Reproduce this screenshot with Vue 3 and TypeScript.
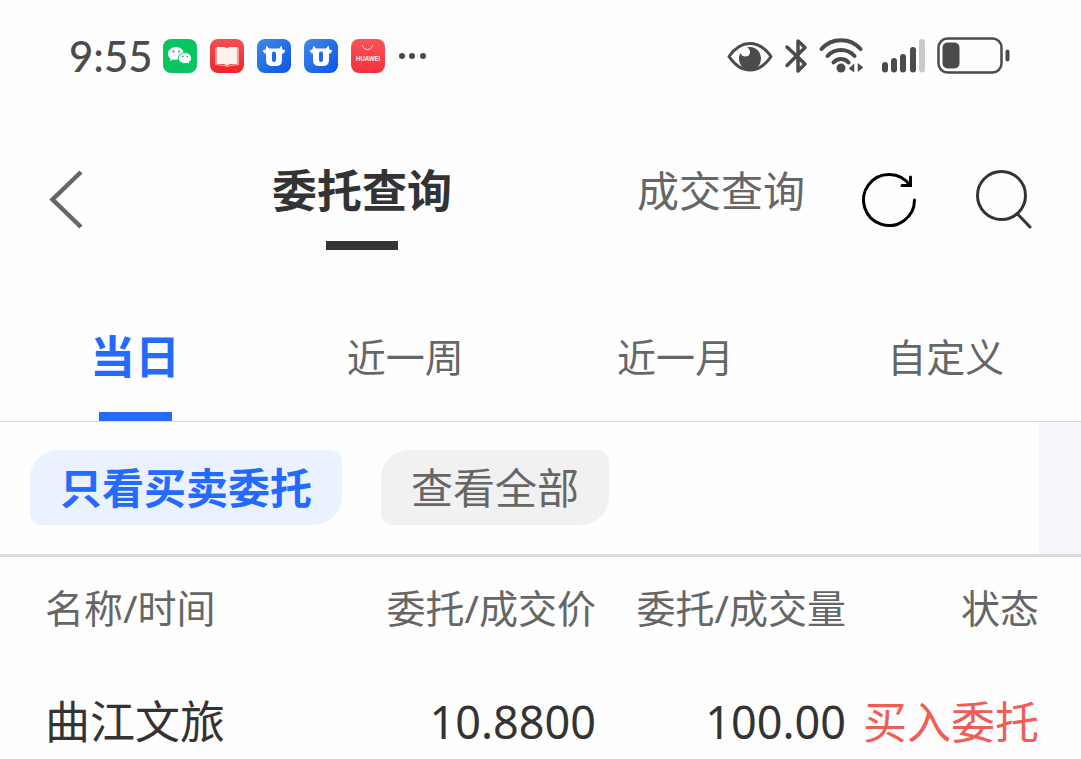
<script setup lang="ts">
import { ref } from 'vue'

interface Order {
  name: string
  price: string
  volume: string
  status: string
}

const queries = ['委托查询', '成交查询']
const ranges = ['当日', '近一周', '近一月', '自定义']
const filters = ['只看买卖委托', '查看全部']
const headings = ['名称/时间', '委托/成交价', '委托/成交量', '状态']

const query = ref(0)
const range = ref(0)
const filter = ref(0)

const orders: Order[] = [
  { name: '曲江文旅', price: '10.8800', volume: '100.00', status: '买入委托' },
]
</script>

<template>
  <div class="page">
    <header class="status">
      <span class="clock">9:55</span>
      <div class="apps">
        <svg class="app" viewBox="0 0 34 34" aria-hidden="true">
          <defs>
            <linearGradient id="blue" x1="0" y1="0" x2="1" y2="1">
              <stop offset="0" stop-color="#3f8ae8" />
              <stop offset="1" stop-color="#0b55e6" />
            </linearGradient>
            <linearGradient id="red" x1="0" y1="0" x2="0" y2="1">
              <stop offset="0" stop-color="#f4504f" />
              <stop offset="1" stop-color="#f02428" />
            </linearGradient>
            <linearGradient id="coral" x1="0" y1="0" x2="0" y2="1">
              <stop offset="0" stop-color="#fa5357" />
              <stop offset="1" stop-color="#f6303c" />
            </linearGradient>
          </defs>
          <rect width="34" height="34" rx="8" fill="#07c561" />
          <path d="M13 8C8.500 8 5 11 5 14.700c0 2 1 3.700 2.600 4.900L7 22l3-1.500c3.500 1 10.500-.8 10.500-6.500C20.500 10.500 17 8 13 8z" fill="#fff" />
          <path d="M22 13.500c-3.900 0-6.700 2.600-6.700 5.600 0 4 4.500 6.300 8.700 5.200l2.500 1.300-.5-2.200c1.600-1.100 2.500-2.600 2.500-4.300 0-3-2.900-5.600-6.500-5.600z" fill="#fff" stroke="#07c561" />
          <g fill="#07a552">
            <circle cx="10.500" cy="12.500" r="1" /><circle cx="16" cy="12.500" r="1" />
            <circle cx="19.800" cy="17.500" r=".8" /><circle cx="24.300" cy="17.500" r=".8" />
          </g>
        </svg>
        <svg class="app" viewBox="0 0 34 34" aria-hidden="true">
          <rect width="34" height="34" rx="8" fill="url(#red)" />
          <path d="M5 9l2-1v17l9 1 1 1 1-1 9-1V8l2 1v17l-9 1-3 1-3-1-9-1z" fill="#fa9a94" />
          <path d="M7 8h7l3 1 3-1h7v17h-7l-3 1.500L14 25H7z" fill="#fff1ee" />
        </svg>
        <svg v-for="n in 2" :key="n" class="app" viewBox="0 0 34 34" aria-hidden="true">
          <rect width="34" height="34" rx="8" fill="url(#blue)" />
          <path d="M9.500 6.500L12 9.500h10l2.500-3 1 4 3 1-2 3H25V21q0 6-6 6h-4q-6 0-6-6v-6.500H7.500l-2-3 3-1z" fill="#fff" />
          <rect x="15" y="12.500" width="4" height="10.500" rx="2" fill="#2068e6" />
        </svg>
        <svg class="app" viewBox="0 0 34 34" aria-hidden="true">
          <rect width="34" height="34" rx="8" fill="url(#coral)" />
          <path d="M11.500 6.500c1 5.500 9 5.500 10 0" fill="none" stroke="#ffd5d5" stroke-width="1" stroke-linecap="round" />
          <text x="17" y="22" class="brand">HUAWEI</text>
        </svg>
        <svg class="more" viewBox="0 0 30 8" aria-hidden="true">
          <circle cx="4" cy="4" r="3" /><circle cx="14" cy="4" r="3" /><circle cx="25" cy="4" r="3" />
        </svg>
      </div>
      <div class="system">
        <svg width="48" height="40" viewBox="0 0 48 40" aria-hidden="true">
          <path d="M3 20.500Q12 7.500 24 7.500T45 20.500Q36 34 24 34T3 20.500z" fill="none" stroke="#4b4b4b" stroke-width="3" stroke-linejoin="round" />
          <path d="M21 11.500c8-2 14 4 14 11 0 7-5 11.500-11 11.500S13 29 13 23c0-2.500.4-4 1.500-6 1.500 5 9.500 4.500 9.500-.5 0-2.500-1-4-3-5z" fill="#4b4b4b" />
        </svg>
        <svg width="24" height="40" viewBox="0 0 24 40" aria-hidden="true">
          <path d="M3 11L21 28 14 35V5l7 6.500L3 29.500" fill="none" stroke="#4b4b4b" stroke-width="3.500" stroke-linecap="round" stroke-linejoin="round" />
        </svg>
        <svg width="52" height="40" viewBox="0 0 52 40" aria-hidden="true">
          <path d="M3.500 13A26 26 0 0 1 42.500 13M9.500 20A18 18 0 0 1 36.500 20M15.500 26.500A10 10 0 0 1 30.500 26.500" fill="none" stroke="#4b4b4b" stroke-width="4" stroke-linecap="round" />
          <circle cx="23" cy="32" r="4.500" fill="#4b4b4b" />
          <path d="M31 32.500l5-4.500v8zM45 31.500l-5-4v8z" fill="#4b4b4b" stroke="#4b4b4b" stroke-width=".5" />
        </svg>
        <svg width="46" height="40" viewBox="0 0 46 40" aria-hidden="true">
          <g fill="#4b4b4b">
            <rect x="2" y="26" width="6" height="10.500" rx="3" />
            <rect x="11" y="22" width="6" height="14.500" rx="3" />
            <rect x="20" y="18" width="6" height="18.500" rx="3" />
            <rect x="30" y="11" width="6" height="25.500" rx="3" />
          </g>
          <rect x="39" y="3" width="6" height="33.500" rx="3" fill="#cacaca" />
        </svg>
        <svg width="76" height="40" viewBox="0 0 76 40" aria-hidden="true">
          <rect x="2.500" y="2.500" width="63" height="34" rx="9" fill="none" stroke="#4b4b4b" stroke-width="2.500" />
          <rect x="6.500" y="6.500" width="17" height="26" rx="5" fill="#4b4b4b" />
          <rect x="69.500" y="13.500" width="4" height="12" rx="2" fill="#4b4b4b" />
        </svg>
      </div>
    </header>

    <nav class="top">
      <button class="icon" type="button" aria-label="返回">
        <svg width="36" height="60" viewBox="0 0 36 60">
          <path d="M33 2L4.500 29.500 33 57" fill="none" stroke="#666" stroke-width="4.500" />
        </svg>
      </button>
      <div class="queries">
        <button
          v-for="(label, i) in queries"
          :key="label"
          type="button"
          class="query"
          :class="{ active: query === i }"
          @click="query = i"
        >{{ label }}</button>
      </div>
      <div class="tools">
        <button class="icon" type="button" aria-label="刷新">
          <svg width="60" height="60" viewBox="0 0 60 60">
            <path d="M55.500 30A25.500 25.500 0 1 1 51 15.500" fill="none" stroke="#000" stroke-width="3" stroke-linecap="round" />
            <path d="M51.500 7V15.500H43" fill="none" stroke="#000" stroke-width="3" stroke-linecap="round" />
          </svg>
        </button>
        <button class="icon" type="button" aria-label="搜索">
          <svg width="60" height="60" viewBox="0 0 60 60">
            <circle cx="28.500" cy="25.500" r="24" fill="none" stroke="#333" stroke-width="3" />
            <path d="M44 43.500L57 57" stroke="#333" stroke-width="3" stroke-linecap="round" />
          </svg>
        </button>
      </div>
    </nav>

    <div class="ranges">
      <button
        v-for="(label, i) in ranges"
        :key="label"
        type="button"
        class="range"
        :class="{ active: range === i }"
        @click="range = i"
      >{{ label }}</button>
    </div>

    <div class="filters">
      <div class="chips">
        <button
          v-for="(label, i) in filters"
          :key="label"
          type="button"
          class="chip"
          :class="{ active: filter === i }"
          @click="filter = i"
        >{{ label }}</button>
      </div>
      <div class="edge"></div>
    </div>

    <table class="orders">
      <thead>
        <tr>
          <th v-for="h in headings" :key="h" scope="col">{{ h }}</th>
        </tr>
      </thead>
      <tbody>
        <tr v-for="o in orders" :key="o.name">
          <td>{{ o.name }}</td>
          <td>{{ o.price }}</td>
          <td>{{ o.volume }}</td>
          <td class="buy">{{ o.status }}</td>
        </tr>
      </tbody>
    </table>
  </div>
</template>

<style>
body {
  background: #fefefe;
}
</style>

<style scoped>
.page {
  font-family: "Noto Sans", "Noto Sans CJK SC", sans-serif;
  color: #333;
}

svg {
  display: block;
}

button {
  border: 0;
  padding: 0;
  background: none;
  font-family: inherit;
  color: #666;
  white-space: nowrap;
  cursor: pointer;
}

.status {
  display: flex;
  align-items: center;
  height: 112px;
  padding: 0 69px;
}

.clock {
  font-family: Lato, sans-serif;
  font-size: 42px;
  font-weight: 500;
  line-height: 60px;
  color: #4b4b4b;
}

.apps {
  display: flex;
  align-items: center;
  gap: 13px;
  margin-left: 10px;
}

.app {
  width: 34px;
  height: 34px;
}

.brand {
  font-family: Inter, sans-serif;
  font-size: 6px;
  font-weight: 600;
  fill: #fff;
  text-anchor: middle;
}

.more {
  width: 30px;
  height: 8px;
  fill: #4b4b4b;
}

.system {
  display: flex;
  gap: 10px;
  margin-left: auto;
}

.top {
  display: flex;
  align-items: flex-start;
  padding: 48px 48px 0;
}

.icon {
  display: flex;
  align-items: center;
  height: 80px;
}

.queries {
  flex: 1;
  display: flex;
  justify-content: space-between;
  padding: 0 54px 0 188px;
}

.query {
  display: flex;
  flex-direction: column;
  align-items: center;
  font-size: 42px;
  line-height: 62px;
}

.query.active {
  font-size: 45px;
  font-weight: 700;
  color: #333;
}

.query.active::after {
  content: "";
  width: 72px;
  height: 9px;
  margin-top: 19px;
  background: #333;
}

.tools {
  display: flex;
  gap: 54px;
}

.ranges {
  display: grid;
  grid-template-columns: repeat(4, 1fr);
  height: 171px;
  border-bottom: 1px solid #dbdbdb;
}

.range {
  display: flex;
  flex-direction: column;
  align-items: center;
  padding-top: 77px;
  font-size: 39px;
  line-height: 60px;
}

.range.active {
  font-size: 45px;
  font-weight: 700;
  color: #246bfd;
}

.range.active::after {
  content: "";
  width: 73px;
  height: 9px;
  margin-top: 25px;
  background: #246bfd;
}

.filters {
  display: flex;
  border-bottom: 3px solid #dbdbdb;
}

.chips {
  flex: 1;
  display: flex;
  gap: 39px;
  padding: 28px 30px 29px;
}

.chip {
  height: 75px;
  padding: 0 30px;
  border-radius: 28px 12px;
  background: #f1f1f1;
  font-size: 42px;
  line-height: 75px;
}

.chip.active {
  background: #ebf2ff;
  color: #246bfd;
  font-weight: 700;
}

.edge {
  width: 42px;
  background: #f5f6f9;
}

.orders {
  width: 100%;
  table-layout: fixed;
  border-collapse: collapse;
  text-align: right;
  white-space: nowrap;
}

th {
  width: 250px;
  height: 102px;
  padding: 0;
  font-size: 39px;
  font-weight: 400;
  line-height: 54px;
  color: #666;
}

td {
  padding: 36px 0 0;
  font-size: 45px;
  line-height: 54px;
}

th:first-child,
td:first-child {
  width: auto;
  padding-left: 45px;
  text-align: left;
}

th:last-child,
td:last-child {
  width: 193px;
  padding-right: 42px;
}

td.buy {
  font-size: 44px;
  color: #ef5d56;
}
</style>
